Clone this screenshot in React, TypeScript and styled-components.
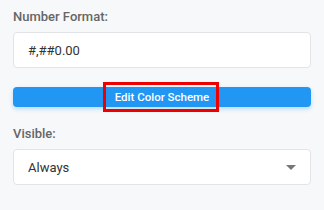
import styled, { createGlobalStyle } from "styled-components";

const GlobalStyle = createGlobalStyle`
  html, body {
    margin: 0;
    padding: 0;
    background: #f7f8fa;
    font-family: Roboto, "Noto Sans", sans-serif;
  }
`;

const Panel = styled.div`
  width: 324px;
  height: 210px;
  box-sizing: border-box;
  padding: 8px 13px 0 13px;
  display: flex;
  flex-direction: column;
`;

const Label = styled.div`
  font-size: 13px;
  font-weight: 500;
  color: #666;
  line-height: 18px;
  margin-bottom: 6px;
`;

const Field = styled.div`
  height: 36px;
  box-sizing: border-box;
  background: #fff;
  border: 1px solid #e2e4e8;
  border-radius: 4px;
  display: flex;
  align-items: center;
  justify-content: space-between;
  padding: 0 14px 0 14px;
  font-size: 13px;
  color: #333;
`;

const Arrow = styled.span`
  width: 0;
  height: 0;
  border-left: 5px solid transparent;
  border-right: 5px solid transparent;
  border-top: 5px solid #777;
`;

const ColorButton = styled.button`
  margin-top: 19px;
  height: 20px;
  width: 100%;
  display: flex;
  align-items: center;
  justify-content: center;
  background: #2196f3;
  border: none;
  border-radius: 4px;
  box-shadow: 0 2px 4px rgba(33, 150, 243, 0.3);
  position: relative;
  color: #fff;
  font-family: Roboto, "Noto Sans", sans-serif;
  font-size: 11.5px;
  font-weight: 500;
  padding: 0;
  cursor: pointer;
`;

const Highlight = styled.span`
  position: absolute;
  left: 90px;
  top: -5px;
  width: 116px;
  height: 30px;
  box-sizing: border-box;
  border: 3px solid #ee0000;
  pointer-events: none;
`;

const Section = styled.div<{ gap: number }>`
  margin-top: ${(p) => p.gap}px;
`;

export default function App() {
  return (
    <>
      <GlobalStyle />
      <Panel>
        <Section gap={0}>
          <Label>Number Format:</Label>
          <Field>#,##0.00</Field>
        </Section>
        <ColorButton>
          Edit Color Scheme
          <Highlight />
        </ColorButton>
        <Section gap={18}>
          <Label>Visible:</Label>
          <Field>
            Always
            <Arrow />
          </Field>
        </Section>
      </Panel>
    </>
  );
}
